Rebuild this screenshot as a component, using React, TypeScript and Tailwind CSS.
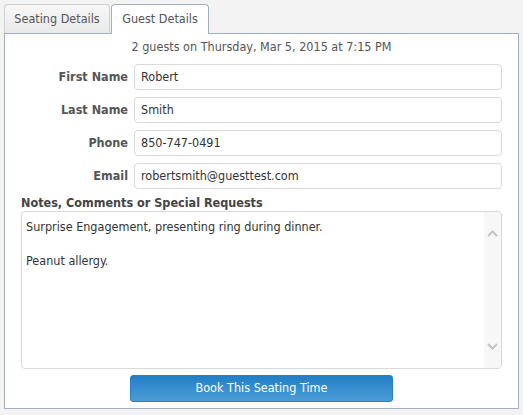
import React from "react";

const fields = [
  { label: "First Name", value: "Robert" },
  { label: "Last Name", value: "Smith" },
  { label: "Phone", value: "850-747-0491" },
  { label: "Email", value: "robertsmith@guesttest.com" },
];

function App() {
  return (
    <div
      className="w-[523px] h-[415px] bg-[#f3f3f3] pt-[4px] pl-[4px] text-[12.5px] text-[#333]"
      style={{ fontFamily: "Tahoma, 'DejaVu Sans Condensed', 'Liberation Sans', sans-serif" }}
    >
      {/* Tabs */}
      <div className="flex h-[29px] items-end">
        <div className="h-[29px] w-[106px] flex items-center justify-center rounded-t-[4px] border border-b-0 border-[#d0d0d0] bg-gradient-to-b from-[#f7f7f7] to-[#e9e9e9] text-[#555]">
          Seating Details
        </div>
        <div className="h-[30px] w-[98px] ml-[1px] flex items-center justify-center rounded-t-[4px] border border-b-0 border-[#a6adc2] bg-white text-[#555] relative top-[1px]">
          Guest Details
        </div>
      </div>

      {/* Panel */}
      <div className="w-[515px] h-[376px] border border-[#a6adc2] bg-white px-[16px]">
        <div className="text-center pt-[5px] h-[24px] text-[#555] leading-[16px]">
          2 guests on Thursday, Mar 5, 2015 at 7:15 PM
        </div>
        <div className="flex flex-col gap-[7px] mt-[6px]">
          {fields.map((f) => (
            <div key={f.label} className="flex items-center">
              <div className="w-[113px] text-right font-bold text-[#555] pr-[6px]">{f.label}</div>
              <div className="w-[368px] h-[26px] border border-[#d9d9d9] rounded-[4px] flex items-center px-[6px] text-[#333]">
                {f.value}
              </div>
            </div>
          ))}
        </div>
        <div className="font-bold text-[#444] mt-[7px] leading-[14px]">Notes, Comments or Special Requests</div>
        <div className="w-[481px] h-[158px] border border-[#d9d9d9] rounded-[4px] flex mt-[1px]">
          <div className="flex-1 pl-[4px] pt-[6px] leading-[17px] text-[#333]">
            <div>Surprise Engagement, presenting ring during dinner.</div>
            <div className="h-[17px]" />
            <div>Peanut allergy.</div>
          </div>
          <div className="w-[17px] bg-[#f7f7f7] rounded-r-[4px] flex flex-col items-center justify-between py-[18px]">
            <svg width="11" height="7" viewBox="0 0 11 7">
              <path d="M1 6 L5.5 1.5 L10 6" fill="none" stroke="#c4c4c4" strokeWidth="2" />
            </svg>
            <svg width="11" height="7" viewBox="0 0 11 7">
              <path d="M1 1 L5.5 5.5 L10 1" fill="none" stroke="#c4c4c4" strokeWidth="2" />
            </svg>
          </div>
        </div>
        <div className="flex justify-center mt-[6px]">
          <button className="w-[263px] h-[27px] rounded-[3px] border border-[#2a7fc0] bg-gradient-to-b from-[#1f7fc6] to-[#4c9dd6] text-white">
            Book This Seating Time
          </button>
        </div>
      </div>
    </div>
  );
}

export default App;
